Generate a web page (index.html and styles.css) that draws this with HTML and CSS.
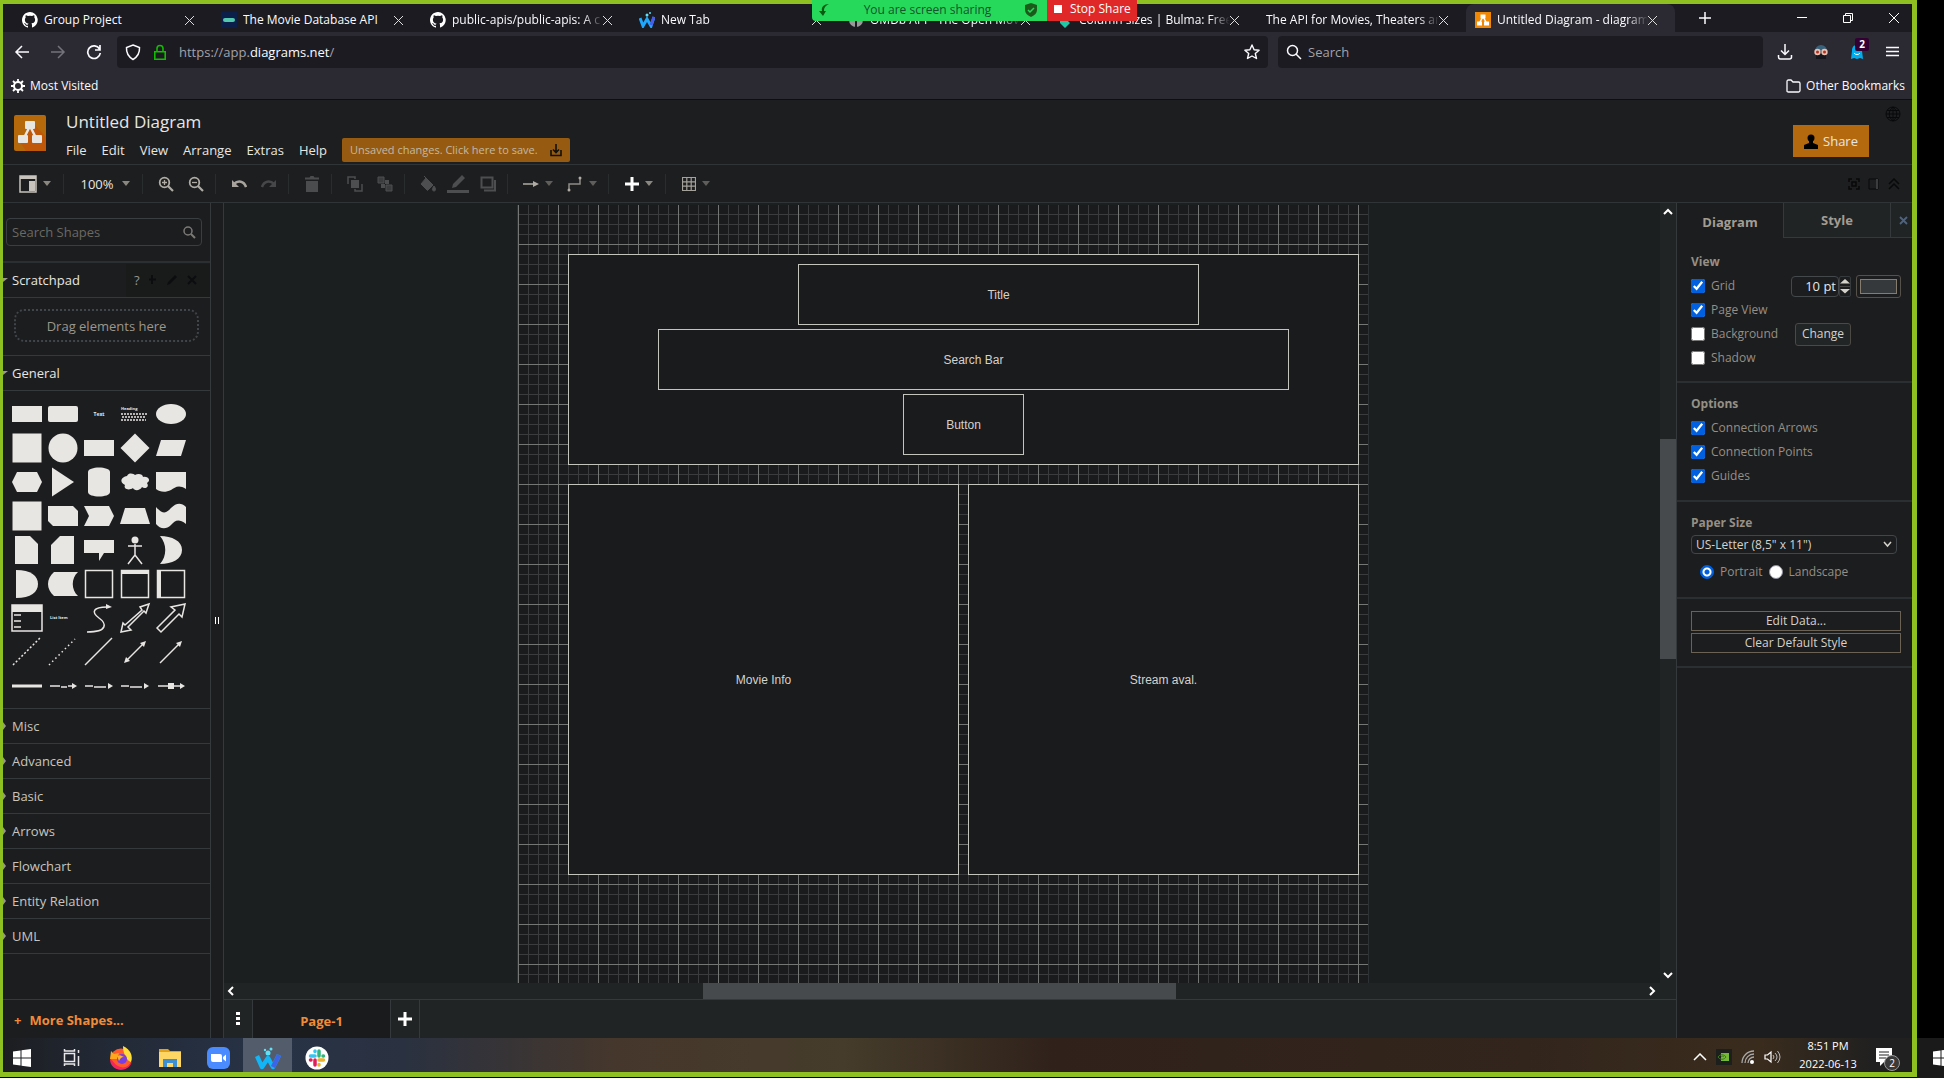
FILE: index.html
```html
<!DOCTYPE html>
<html lang="en">
<head>
<meta charset="utf-8">
<title>Untitled Diagram - diagrams.net</title>
<link rel="stylesheet" href="styles.css">
</head>
<body>
<div class="monitor">
  <div class="share-banner">
    <div class="sharing">
      <svg width="12" height="14" viewBox="0 0 12 14"><path d="M11 1C6 1 3 4 4 8H1l4 5 3-5H6C6 5 7 3 11 1z" fill="#0b5a12"/></svg>
      <span>You are screen sharing</span>
      <svg width="12" height="14" viewBox="0 0 12 14"><path d="M6 0l6 2v5c0 3-2 5-6 7-4-2-6-4-6-7V2z" fill="#1c5a1c"/><path d="M3 7l2 2 4-4" stroke="#27d95b" stroke-width="1.5" fill="none"/></svg>
    </div>
    <button class="stop"><i></i>Stop Share</button>
  </div>

  <nav class="tabs">
    <a class="tab first" href="#"><svg class="fav" viewBox="0 0 16 16"><path fill="#fff" d="M8 0C3.600 0 0 3.600 0 8c0 3.500 2.300 6.500 5.500 7.600.4.100.5-.2.500-.4v-1.400c-2.200.5-2.700-1-2.700-1-.4-.9-.9-1.200-.9-1.200-.7-.5.1-.5.100-.5.800.1 1.200.8 1.200.8.700 1.200 1.900.9 2.300.7.100-.5.300-.9.500-1.100-1.800-.2-3.600-.9-3.600-4 0-.9.300-1.600.8-2.100-.1-.2-.4-1 .1-2.100 0 0 .7-.2 2.200.8a7.500 7.500 0 0 1 4 0c1.500-1 2.200-.8 2.200-.8.400 1.100.2 1.900.1 2.100.5.600.8 1.300.8 2.100 0 3.100-1.900 3.700-3.700 3.900.3.300.6.800.6 1.500v2.200c0 .2.100.5.500.4A8 8 0 0 0 8 0z"/></svg><span>Group Project</span><b class="x"></b></a>
    <a class="tab" href="#"><svg class="fav" viewBox="0 0 16 16"><rect width="16" height="16" fill="#0b1f4a"/><rect x="2" y="6" width="12" height="4" rx="2" fill="#55c9b0"/></svg><span>The Movie Database API</span><b class="x"></b></a>
    <a class="tab" href="#"><svg class="fav" viewBox="0 0 16 16"><path fill="#fff" d="M8 0C3.600 0 0 3.600 0 8c0 3.500 2.300 6.500 5.500 7.600.4.100.5-.2.500-.4v-1.400c-2.200.5-2.700-1-2.700-1-.4-.9-.9-1.200-.9-1.200-.7-.5.1-.5.100-.5.800.1 1.200.8 1.200.8.700 1.200 1.900.9 2.300.7.100-.5.300-.9.500-1.100-1.800-.2-3.600-.9-3.600-4 0-.9.300-1.600.8-2.100-.1-.2-.4-1 .1-2.100 0 0 .7-.2 2.200.8a7.500 7.500 0 0 1 4 0c1.500-1 2.200-.8 2.200-.8.400 1.100.2 1.900.1 2.100.5.600.8 1.300.8 2.100 0 3.100-1.900 3.700-3.700 3.900.3.300.6.800.6 1.500v2.200c0 .2.100.5.500.4A8 8 0 0 0 8 0z"/></svg><span>public-apis/public-apis: A c</span><b class="x"></b></a>
    <a class="tab" href="#"><svg class="fav" viewBox="0 0 16 16"><path d="M1 6l3 8 4-7 4 7 3-9" fill="none" stroke="#1ea7fd" stroke-width="3"/><path d="M12 13l3-8" stroke="#4a5be8" stroke-width="3"/><circle cx="8" cy="3" r="1.500" fill="#5fe0f5"/><circle cx="11" cy="1" r="1" fill="#5fe0f5"/></svg><span>New Tab</span><b class="x"></b></a>
    <a class="tab" href="#"><svg class="fav" viewBox="0 0 16 16"><circle cx="8" cy="8" r="7" fill="#999"/><path d="M8 1v14M1 8h14" stroke="#1c1b22" stroke-width="2"/></svg><span>OMDb API - The Open Movie</span><b class="x"></b></a>
    <a class="tab" href="#"><svg class="fav" viewBox="0 0 16 16"><path d="M8 0l5 5-3 3 3 3-5 5-5-5V5z" fill="#21c8a8"/></svg><span>Column sizes | Bulma: Free, o</span><b class="x"></b></a>
    <a class="tab" href="#"><span>The API for Movies, Theaters and</span><b class="x"></b></a>
    <a class="tab active" href="#"><svg class="fav" viewBox="0 0 32 32"><rect width="32" height="32" fill="#f08705"/><path d="M16 9l-7 13M16 9l7 13" stroke="#fff" stroke-width="3"/><path d="M11 5h10v8H11zM4 19h10v8H4zM18 19h10v8H18z" fill="#fff"/></svg><span>Untitled Diagram - diagrams</span><b class="x"></b></a>
    <button class="newtab" aria-label="New tab"><svg width="12" height="12"><path d="M6 0v12M0 6h12" stroke="#fbfbfe" stroke-width="1.500"/></svg></button>
    <div class="winctl">
      <button aria-label="Minimize"><svg width="12" height="12"><path d="M1 5.500h10" stroke="#fff"/></svg></button>
      <button aria-label="Restore"><svg width="12" height="12"><path d="M1.500 3.500h7v7h-7zM3.500 3V1.500h7v7H9" fill="none" stroke="#fff"/></svg></button>
      <button aria-label="Close"><svg width="12" height="12"><path d="M1 1l10 10M11 1L1 11" stroke="#fff"/></svg></button>
    </div>
  </nav>

  <div class="navbar">
    <button class="nb" aria-label="Back"><svg width="16" height="16"><path d="M15 8H2M8 2L2 8l6 6" fill="none" stroke="#fbfbfe" stroke-width="1.500"/></svg></button>
    <button class="nb" aria-label="Forward"><svg width="16" height="16"><path d="M1 8h13M8 2l6 6-6 6" fill="none" stroke="#74737b" stroke-width="1.500"/></svg></button>
    <button class="nb" aria-label="Reload"><svg width="16" height="16"><path d="M13.500 5A6.300 6.300 0 1 0 14.300 9M14 1v5H9" fill="none" stroke="#fbfbfe" stroke-width="1.700"/></svg></button>
    <div class="url">
      <svg width="16" height="17"><path d="M8 1l6.500 2.500c.3 5-1.500 9-6.500 12-5-3-6.800-7-6.500-12z" fill="none" stroke="#fbfbfe" stroke-width="1.500"/></svg>
      <svg width="14" height="17"><path d="M1.800 7.800h10.400v7.400H1.800zM4 8V4.500a3 3 0 0 1 6 0V8" fill="none" stroke="#12bc00" stroke-width="1.600"/></svg>
      <div class="addr" contenteditable="true" role="textbox" aria-label="Address">https://app.<em>diagrams.net</em>/</div>
      <svg width="16" height="16"><path d="M8 1l2.100 4.700 5 .5-3.800 3.300 1.200 5L8 12l-4.500 2.500 1.200-5L.9 6.200l5-.5z" fill="none" stroke="#fbfbfe" stroke-width="1.400" stroke-linejoin="round"/></svg>
    </div>
    <label class="find"><svg width="16" height="16"><circle cx="6.500" cy="6.500" r="5" fill="none" stroke="#fbfbfe" stroke-width="1.500"/><path d="M10 10l5 5" stroke="#fbfbfe" stroke-width="1.500"/></svg><input type="text" placeholder="Search" aria-label="Search the web"></label>
    <div class="exts">
      <button class="nb" aria-label="Downloads"><svg width="16" height="16"><path d="M8 0v10M4 6.500l4 4 4-4M1.500 11v2a2 2 0 0 0 2 2h9a2 2 0 0 0 2-2v-2" fill="none" stroke="#fbfbfe" stroke-width="1.500"/></svg></button>
      <button class="nb" aria-label="Privacy extension"><svg width="16" height="16"><path d="M2 7a6 6 0 0 1 12 0z" fill="#38627c"/><path d="M3 9h10v6H3z" fill="#15171c"/><circle cx="4.500" cy="8" r="3.200" fill="#e8c0b0"/><circle cx="11.500" cy="8" r="3.200" fill="#e8c0b0"/><circle cx="4.500" cy="8" r="1.500" fill="#b03024"/><circle cx="11.500" cy="8" r="1.500" fill="#b03024"/></svg></button>
      <button class="nb ghost" aria-label="Tracker blocker"><svg width="16" height="16"><path d="M8 1c-4 0-5 3-5 6l-1 8 3-1 3 1 3-1 3 1-1-8c0-3-1-6-5-6z" fill="#00aef0"/><path d="M5 9c1 2 5 2 6 0" fill="none" stroke="#fff"/></svg><span>2</span></button>
      <button class="nb" aria-label="Menu"><svg width="14" height="12"><path d="M0 1.500h13M0 5.500h13M0 9.500h13" stroke="#fbfbfe" stroke-width="1.300"/></svg></button>
    </div>
  </div>

  <div class="bookmarks">
    <a href="#"><svg width="14" height="14" viewBox="-7 -7 14 14"><circle r="4" fill="none" stroke="#fff" stroke-width="2"/><path d="M0-7v3M0 7V4M-7 0h3M7 0H4M-5-5l2 2M5 5L3 3M5-5L3-3M-5 5l2-2" stroke="#fff" stroke-width="1.800"/></svg>Most Visited</a>
    <a href="#"><svg width="15" height="14"><path d="M1 12V2.500Q1 1 2.500 1H5l2 2h5.500Q14 3 14 4.500v7Q14 13 12.500 13h-10Q1 13 1 12z" fill="none" stroke="#fbfbfe" stroke-width="1.300"/></svg>Other Bookmarks</a>
  </div>

  <header class="apphead">
    <svg class="logo" width="32" height="36"><rect width="32" height="36" rx="2" fill="#b5690a"/><path d="M19 8l13 14v14H12l-6-9z" fill="#c0580a"/><path d="M16 11L9 25M16 11l7 14" stroke="#e8e6e3" stroke-width="2.500"/><rect x="11" y="6" width="10" height="8" rx="1" fill="#e8e6e3"/><rect x="4" y="20" width="10" height="8" rx="1" fill="#e8e6e3"/><rect x="18" y="20" width="10" height="8" rx="1" fill="#e8e6e3"/></svg>
    <div class="headmain">
      <h1>Untitled Diagram</h1>
      <div class="menu">
        <a href="#">File</a><a href="#">Edit</a><a href="#">View</a><a href="#">Arrange</a><a href="#">Extras</a><a href="#">Help</a>
        <button class="unsaved">Unsaved changes. Click here to save.<svg width="12" height="14"><path d="M1 7v5.500h10V7M6 1v8M3 6.500l3 3 3-3" fill="none" stroke="#111" stroke-width="1.600"/></svg></button>
      </div>
    </div>
    <button class="sharebtn"><svg width="14" height="15"><circle cx="7" cy="4" r="3.500"/><path d="M5 6h4v3l5 2v4H0v-4l5-2z"/></svg>Share</button>
    <svg class="globe" width="16" height="16" viewBox="-8 -8 16 16"><path d="M-7 0H7M0-7V7M-6-3.500H6M-6 3.500H6M0-7C-5-3-5 3 0 7M0-7C5-3 5 3 0 7" fill="none" stroke="#08090a"/><circle r="7" fill="none" stroke="#08090a"/></svg>
  </header>

  <div class="toolbar">
    <div class="tg"><button class="w48" aria-label="View"><svg width="18" height="18"><path d="M1 1h16v16H1z" fill="none" stroke="#c8c4bd" stroke-width="1.500"/><path d="M1 1h16v3H1zM10 6h6v10h-6z" fill="#c8c4bd"/></svg><i class="caret"></i></button></div>
    <div class="tg"><button class="w66">100%<i class="caret"></i></button></div>
    <div class="tg">
      <button aria-label="Zoom in"><svg width="16" height="16"><circle cx="6.500" cy="6.500" r="4.800" fill="none" stroke="#b0aca5" stroke-width="1.800"/><path d="M10 10l5 5" stroke="#b0aca5" stroke-width="2.200"/><path d="M6.500 4v5M4 6.500h5" stroke="#b0aca5" stroke-width="1.300"/></svg></button>
      <button aria-label="Zoom out"><svg width="16" height="16"><circle cx="6.500" cy="6.500" r="4.800" fill="none" stroke="#b0aca5" stroke-width="1.800"/><path d="M10 10l5 5" stroke="#b0aca5" stroke-width="2.200"/><path d="M4 6.500h5" stroke="#b0aca5" stroke-width="1.300"/></svg></button>
    </div>
    <div class="tg">
      <button aria-label="Undo"><svg width="16" height="12"><path d="M3 6c4-4 10-3 12 3" fill="none" stroke="#a8a49d" stroke-width="2.500"/><path d="M1 2v7h7z" fill="#a8a49d"/></svg></button>
      <button aria-label="Redo"><svg width="16" height="12"><path d="M13 6C9 2 3 3 1 9" fill="none" stroke="#454749" stroke-width="2.500"/><path d="M15 2v7H8z" fill="#454749"/></svg></button>
    </div>
    <div class="tg"><button aria-label="Delete"><svg width="14" height="16"><path d="M1 5h12v11H1zM0 1.500h4.500L5.500 0h3l1 1.500H14v2H0z" fill="#4a4c4e"/></svg></button></div>
    <div class="tg">
      <button aria-label="To front"><svg width="16" height="16"><path d="M4 4h8v8H4z" fill="#4c4e50"/><path d="M1 8V1h7v2M15 8v7H8v-2" fill="none" stroke="#4c4e50" stroke-width="1.500"/></svg></button>
      <button aria-label="To back"><svg width="16" height="16"><path d="M1 1h6v6H1zM9 9h6v6H9z" fill="#3a3c3e" stroke="#4c4e50"/><path d="M8 4h4v4H8zM4 8h4v4H4z" fill="#4c4e50"/></svg></button>
    </div>
    <div class="tg">
      <button aria-label="Fill color"><svg width="17" height="16"><path d="M6 2l7 7-5.500 5.500L1 8zM6 2L4 0M14 10c3 4 1 5 0 5s-3-1 0-5z" fill="#4c4e50" stroke="#4c4e50"/></svg></button>
      <button aria-label="Line color"><svg width="22" height="18"><path d="M0 15h22v3H0zM5 13l1-4L15 0l3 3-9 9z" fill="#4c4e50"/></svg></button>
      <button aria-label="Shadow"><svg width="16" height="16"><path d="M1.500 1.500h11v10h-11z" fill="none" stroke="#4c4e50" stroke-width="2"/><path d="M4 14.500h11V4" fill="none" stroke="#4c4e50" stroke-width="2"/></svg></button>
    </div>
    <div class="tg">
      <button class="w44" aria-label="Connection"><svg width="16" height="8"><path d="M0 4h11" stroke="#b0aca5" stroke-width="1.500"/><path d="M10 1l6 3-6 3z" fill="#b0aca5"/></svg><i class="caret dim"></i></button>
      <button class="w44" aria-label="Waypoints"><svg width="16" height="16"><path d="M2 14V8h11V2" fill="none" stroke="#8f8c86" stroke-width="1.500"/><circle cx="2" cy="14" r="1.500" fill="#b0aca5"/><circle cx="13" cy="2" r="1.500" fill="#b0aca5"/></svg><i class="caret dim"></i></button>
    </div>
    <div class="tg"><button class="w44" aria-label="Insert"><svg width="14" height="14"><path d="M7 0v14M0 7h14" stroke="#fff" stroke-width="3"/></svg><i class="caret"></i></button></div>
    <div class="tg last"><button class="w44" aria-label="Table"><svg width="14" height="14"><path d="M.5.500h13v13H.5zM.5 4.800h13M.5 9.200h13M4.800.500v13M9.200.500v13" fill="none" stroke="#a5a29b" stroke-width="1.200"/></svg><i class="caret dim"></i></button></div>
    <div class="tright">
      <svg width="12" height="12"><path d="M1 4V1h3M8 1h3v3M11 8v3H8M4 11H1V8M4 4h4v4H4z" fill="none" stroke="#08090a" stroke-width="1.500"/></svg>
      <svg width="12" height="12"><path d="M1 1h9v10H1z" fill="none" stroke="#08090a"/><path d="M8 1h2v10H8z" fill="#3a3c3e"/></svg>
      <svg width="12" height="12"><path d="M1 6l5-5 5 5M1 11l5-5 5 5" fill="none" stroke="#08090a" stroke-width="1.500"/></svg>
    </div>
  </div>

  <main class="work">
    <aside class="sidebar">
      <div class="searchwrap"><label class="ssearch"><input type="text" placeholder="Search Shapes" aria-label="Search Shapes"><svg width="13" height="13"><circle cx="5" cy="5" r="4" fill="none" stroke="#7c7a76" stroke-width="1.500"/><path d="M8 8l4 4" stroke="#7c7a76" stroke-width="2"/></svg></label></div>
      <div class="sec open"><i></i><span>Scratchpad</span>
        <div class="padtools"><a href="#">?</a><svg width="54" height="12"><path d="M3 1v9M-1 5.500h8" stroke="#0c0d0e" stroke-width="2"/><path d="M18 11l1-3 7-7 2 2-7 7z" fill="#0c0d0e"/><path d="M39 2l8 8M47 2l-8 8" stroke="#0c0d0e" stroke-width="2"/></svg></div>
      </div>
      <div class="padbody"><div class="drag">Drag elements here</div></div>
      <div class="sec open"><i></i><span>General</span></div>
      <div class="shapes">
        <svg viewBox="-18 -17 36 34"><path d="M-15-8h30V8h-30z"/></svg>
        <svg viewBox="-18 -17 36 34"><rect x="-15" y="-8" width="30" height="16" rx="2"/></svg>
        <svg viewBox="-18 -17 36 34"><text x="0" y="2" text-anchor="middle" font-size="5" font-weight="700">Text</text></svg>
        <svg viewBox="-18 -17 36 34"><text x="-14" y="-4" font-size="4" font-weight="700">Heading</text><path class="ln" stroke-dasharray="2 1" d="M-14 0h26M-13 3h24M-14 6h25"/></svg>
        <svg viewBox="-18 -17 36 34"><ellipse rx="15" ry="10"/></svg>

        <svg viewBox="-18 -17 36 34"><path d="M-14.500-14.500h29v29h-29z"/></svg>
        <svg viewBox="-18 -17 36 34"><circle r="14.500"/></svg>
        <svg viewBox="-18 -17 36 34"><path d="M-15-8h30V8h-30z"/></svg>
        <svg viewBox="-18 -17 36 34"><path d="M0-14.500L14.500 0 0 14.500-14.500 0z"/></svg>
        <svg viewBox="-18 -17 36 34"><path d="M-10-8h25L10 8h-25z"/></svg>

        <svg viewBox="-18 -17 36 34"><path d="M-10-10h20l5 10-5 10h-20l-5-10z"/></svg>
        <svg viewBox="-18 -17 36 34"><path d="M-11-14.500L11 0-11 14.500z"/></svg>
        <svg viewBox="-18 -17 36 34"><path d="M-11-10C-11-16 11-16 11-10V10C11 16-11 16-11 10z"/></svg>
        <svg viewBox="-18 -17 36 34"><path d="M-8-6c2-4 7-2 8-1 3-2 8-1 8 2 6-1 8 4 4 6 3 5-3 6-5 4-2 4-8 4-9 1-4 3-10 1-8-3-6-3-4-8 2-9z"/></svg>
        <svg viewBox="-18 -17 36 34"><path d="M-15-10h30V7C7 2 4 6 0 8-6 11-11 10-15 7z"/></svg>

        <svg viewBox="-18 -17 36 34"><path d="M-14.500-14.500h29v29h-29z"/></svg>
        <svg viewBox="-18 -17 36 34"><path d="M-15-10h25l5 5v15h-25l-5-5z"/></svg>
        <svg viewBox="-18 -17 36 34"><path d="M-15-10h25L15 0l-5 10h-25l5-10z"/></svg>
        <svg viewBox="-18 -17 36 34"><path d="M-10-8h20l5 16h-30z"/></svg>
        <svg viewBox="-18 -17 36 34"><path d="M-15-9C-7 0-4-4 0-8 5-13 10-14 15-9V8C7 2 4 5 0 9-5 14-11 13-15 8z"/></svg>

        <svg viewBox="-18 -17 36 34"><path d="M-12-14h15l8 8v20h-23z"/></svg>
        <svg viewBox="-18 -17 36 34"><path d="M-3-14h14v28h-23V-5z"/></svg>
        <svg viewBox="-18 -17 36 34"><path d="M-15-10h30V3H5l-5 8V3h-15z"/></svg>
        <svg viewBox="-18 -17 36 34"><circle cy="-10" r="3.500"/><path class="ln" d="M0-6V5M-7-4H7M0 5l-7 9M0 5l7 9"/></svg>
        <svg viewBox="-18 -17 36 34"><path d="M-11-14C1-14 11-9 11 0S1 14-11 14C-4 6-4-6-11-14z"/></svg>

        <svg viewBox="-18 -17 36 34"><path d="M-11-14C4-14 11-8 11 0S4 14-11 14z"/></svg>
        <svg viewBox="-18 -17 36 34"><path d="M-9-12h24C8-6 8 6 15 12H-9c-8-7-8-17 0-24z"/></svg>
        <svg viewBox="-18 -17 36 34"><path class="ln" d="M-13.500-13.500h27v27h-27z"/></svg>
        <svg viewBox="-18 -17 36 34"><path class="ln" d="M-13.500-13.500h27v27h-27z"/><path d="M-14-14h28v4h-28z"/></svg>
        <svg viewBox="-18 -17 36 34"><path class="ln" d="M-13.500-13.500h27v27h-27z"/><path d="M-14-14h4v28h-4z"/></svg>

        <svg viewBox="-18 -17 36 34"><path class="ln" d="M-15-13h30v26h-30z"/><path d="M-15-13h30v7h-30z"/><path class="ln" d="M-13-3h7M-13 3h7M-13 9h7"/></svg>
        <svg viewBox="-18 -17 36 34"><text x="-13" y="1" font-size="4" font-weight="700">List Item</text></svg>
        <svg viewBox="-18 -17 36 34"><path class="ln" d="M-12 14C10 14 7 5 0 0-8-6-6-11 8-11"/><path d="M7-14l6 3-6 2z"/></svg>
        <svg viewBox="-18 -17 36 34"><path class="ln" d="M-14 14l2-9 2 2L7-8 5-11l9-3-3 9-2-2L-7 9l3 3z"/></svg>
        <svg viewBox="-18 -17 36 34"><path class="ln" d="M-14 10L4-8 0-11l14-3-3 13-3-3-18 18z"/></svg>

        <svg viewBox="-18 -17 36 34"><path class="ln" stroke-dasharray="2 2" d="M-14 13L13-14"/></svg>
        <svg viewBox="-18 -17 36 34"><path class="ln" stroke-dasharray="1.500 3" d="M-14 13L12-13"/></svg>
        <svg viewBox="-18 -17 36 34"><path class="ln" d="M-14 13L13-14"/></svg>
        <svg viewBox="-18 -17 36 34"><path class="ln" d="M-9 9L9-9"/><path d="M-11 11l2-6 4 4zM11-11L9-5 5-9z"/></svg>
        <svg viewBox="-18 -17 36 34"><path class="ln" d="M-11 11L9-9"/><path d="M11-11L9-5 5-9z"/></svg>

        <svg viewBox="-18 -17 36 34"><path d="M-15-1.500h30v3h-30z"/></svg>
        <svg viewBox="-18 -17 36 34"><path class="ln" d="M-13 0h10M-2 1h6M5 0h5"/><path d="M9-3l5 3-5 3z"/></svg>
        <svg viewBox="-18 -17 36 34"><path class="ln" d="M-14 0h8M-5 1h12"/><path d="M9-3l5 3-5 3z"/></svg>
        <svg viewBox="-18 -17 36 34"><path class="ln" d="M-14 0h8M-5 1h12"/><path d="M9-3l5 3-5 3z"/></svg>
        <svg viewBox="-18 -17 36 34"><path class="ln" d="M-13 0h25"/><path d="M-3-3h6v6h-6zM9-3l5 3-5 3z"/></svg>
      </div>
      <div class="sec"><i></i><span>Misc</span></div>
      <div class="sec"><i></i><span>Advanced</span></div>
      <div class="sec"><i></i><span>Basic</span></div>
      <div class="sec"><i></i><span>Arrows</span></div>
      <div class="sec"><i></i><span>Flowchart</span></div>
      <div class="sec"><i></i><span>Entity Relation</span></div>
      <div class="sec"><i></i><span>UML</span></div>
      <button class="more"><span>+</span>More Shapes...</button>
    </aside>
    <div class="splitter"><i></i></div>

    <section class="editor">
      <div class="viewport">
        <div class="page">
          <div class="node area"></div>
          <div class="node title">Title</div>
          <div class="node search">Search Bar</div>
          <div class="node btn">Button</div>
          <div class="node info">Movie Info</div>
          <div class="node stream">Stream aval.</div>
        </div>
      </div>
      <div class="vscroll"><svg width="10" height="7"><path d="M1 6l4-4 4 4" /></svg><i></i><svg width="10" height="7"><path d="M1 1l4 4 4-4"/></svg></div>
      <div class="hscroll"><svg width="7" height="10"><path d="M6 1L2 5l4 4"/></svg><i></i><svg width="7" height="10"><path d="M1 1l4 4-4 4"/></svg></div>
      <div class="pages">
        <button class="dots" aria-label="Pages"><svg width="4" height="14"><path d="M0 0h4v3H0zM0 5h4v3H0zM0 10h4v3H0z" fill="#fff"/></svg></button>
        <button class="pagetab">Page-1</button>
        <button class="dots" aria-label="Insert page"><svg width="14" height="14"><path d="M7 0v14M0 7h14" stroke="#fff" stroke-width="3"/></svg></button>
      </div>
    </section>

    <aside class="format">
      <div class="ftabs"><button class="on">Diagram</button><button>Style</button><button class="fx" aria-label="Close"><svg width="9" height="9"><path d="M1 1l7 7M8 1L1 8" stroke="#51637c" stroke-width="1.800"/></svg></button></div>
      <div class="fsec first">
        <h2>View</h2>
        <div class="row"><label><input type="checkbox" checked>Grid</label>
          <div class="gridsize"><input type="text" value="10 pt" aria-label="Grid size"><button class="spin" aria-label="Step grid size"><svg width="10" height="18"><path d="M0 6.500L5 2l5 4.500zM0 12l5 4.500L10 12z" fill="#d5d2cc"/><path d="M0 9.500h10" stroke="#444"/></svg></button></div>
          <button class="swatch" aria-label="Grid color"><i></i></button></div>
        <div class="row"><label><input type="checkbox" checked>Page View</label></div>
        <div class="row"><label><input type="checkbox">Background</label><button class="change">Change</button></div>
        <div class="row"><label><input type="checkbox">Shadow</label></div>
      </div>
      <div class="fsec options">
        <h2>Options</h2>
        <div class="row"><label><input type="checkbox" checked>Connection Arrows</label></div>
        <div class="row"><label><input type="checkbox" checked>Connection Points</label></div>
        <div class="row"><label><input type="checkbox" checked>Guides</label></div>
      </div>
      <div class="fsec paper">
        <h2>Paper Size</h2>
        <div class="sel"><select aria-label="Paper Size"><option>US-Letter (8,5" x 11")</option></select><svg width="9" height="7"><path d="M1 1l3.500 4L8 1" fill="none" stroke="#d5d2cc" stroke-width="1.500"/></svg></div>
        <div class="row radios"><label><input type="radio" name="o" checked>Portrait</label><label><input type="radio" name="o">Landscape</label></div>
      </div>
      <div class="fsec acts"><button>Edit Data...</button><button>Clear Default Style</button></div>
    </aside>
  </main>

  <footer class="taskbar">
    <button aria-label="Start"><svg width="18" height="18"><path d="M0 2.500L7.500 1.500V8.500H0zM8.500 1.300L18 0v8.500H8.500zM0 9.500h7.500v7L0 15.500zM8.500 9.500H18V18L8.500 16.700z" fill="#fff"/></svg></button>
    <button aria-label="Task view"><svg width="18" height="18"><path d="M1.500 4.500h10v8h-10zM1.500 0v2h10V0M1.500 17v-2h10v2M15.500 1v3M15.500 7v10" fill="none" stroke="#e8e8e8" stroke-width="1.500"/></svg></button>
    <button aria-label="Firefox"><svg width="24" height="24"><circle cx="12" cy="13" r="10.500" fill="#ff5a2c"/><path d="M14 0c8 4 10 10 8 16-4-1-8-8-8-16z" fill="#ffde3a"/><path d="M1 13c0 14 20 14 22 2-3 6-9 8-14 5-4-2-5-6-8-7z" fill="#f5255e"/><path d="M2 5l3 3 5-1-2 6H1z" fill="#ffa51e"/><circle cx="13" cy="13" r="5" fill="#7a3fe0"/><path d="M8 10c3-2 5 0 7 1-3 0-4 2-5 4z" fill="#ffb02a"/></svg></button>
    <button aria-label="File Explorer"><svg width="24" height="20"><path d="M1 1h9l2 2h11v4H1z" fill="#e3a21a"/><path d="M1 4h22v15H1z" fill="#fdd663"/><path d="M5 19v-8h14v8h-4v-4H9v4z" fill="#3d8fd1"/></svg></button>
    <button aria-label="Zoom"><svg width="24" height="24"><rect x="0" y="1" width="23" height="22" rx="6" fill="#4a8cff"/><path d="M4 8h9q2 0 2 2v6H6q-2 0-2-2zM16 11l3-2.500v7L16 13z" fill="#fff"/></svg></button>
    <button class="cur" aria-label="Browser"><svg width="26" height="24"><path d="M2 10l5 11 6-9 5 9 6-12" fill="none" stroke="#12b5f5" stroke-width="4.500" stroke-linejoin="round"/><path d="M18 21l6-12" stroke="#3d63e6" stroke-width="4.500"/><circle cx="13" cy="7" r="2.500" fill="#5fe0f5"/><circle cx="16" cy="3" r="1.500" fill="#5fe0f5"/><circle cx="10" cy="4" r="1.200" fill="#5fe0f5"/></svg></button>
    <button aria-label="Slack"><svg width="24" height="24"><circle cx="12" cy="12" r="11.500" fill="#fff"/><g stroke-width="3.500" stroke-linecap="round"><path d="M10 5v.5M5.500 10H10" stroke="#36c5f0"/><path d="M14 5v5M18.500 10H18" stroke="#2eb67d"/><path d="M14 19v-.5M14 14h4.500" stroke="#ecb22e"/><path d="M10 14v5M6 14h-.5" stroke="#e01e5a"/></g></svg></button>
    <div class="tray">
      <svg width="14" height="8"><path d="M1 7l6-6 6 6" fill="none" stroke="#fff" stroke-width="1.500"/></svg>
      <svg width="16" height="16"><path fill="#1c1f1c" d="M0 0h16v16H0z"/><path d="M5 4h8v8H5z" fill="#76b938"/><path d="M2 8c2-3 6-3 8 0-2 3-6 3-8 0zM5 8c1-1 2-1 3 0" fill="none" stroke="#3d7a1e"/></svg>
      <svg width="14" height="14"><path d="M1 13A12 12 0 0 1 13 1M4 13a9 9 0 0 1 9-9M7 13a6 6 0 0 1 6-6" fill="none" stroke="#aaa" stroke-width="1.300"/><circle cx="11" cy="12" r="2" fill="#fff"/></svg>
      <svg width="17" height="14"><path d="M1 5h2.500L7 2v10L3.500 9H1z" fill="none" stroke="#fff" stroke-width="1.200"/><path d="M9 5q2 2 0 4M11 3q4 4 0 8M13.500 1q5 6 0 12" fill="none" stroke="#bbb"/></svg>
      <div class="clock"><span>8:51 PM</span><span>2022-06-13</span></div>
      <div class="notif"><svg width="18" height="18"><path d="M0 0h16v14H8l-4 4v-4H0z" fill="#fff"/><path d="M3 4h10M3 7h10M3 10h7" stroke="#222" stroke-width="1.200"/></svg><span>2</span></div>
    </div>
  </footer>
</div>
<div class="next-monitor"><div><svg width="18" height="18"><path d="M0 2.500L7.500 1.500V8.500H0zM8.500 1.300L18 0v8.500H8.500zM0 9.500h7.500v7L0 15.500zM8.500 9.500H18V18L8.500 16.700z" fill="#fff"/></svg></div></div>
</body>
</html>
```
FILE: styles.css
```css
* { box-sizing: border-box; }
body {
  margin: 0;
  display: flex;
  height: 100vh;
  overflow: hidden;
  background: #000;
  color: #e8e6e3;
  font: 12px/16px "Open Sans", "Noto Sans", sans-serif;
}
button, input, select { font: inherit; color: inherit; margin: 0; padding: 0; border: 0; background: none; }
a { color: inherit; text-decoration: none; }
svg { display: block; flex: none; }
h1, h2 { margin: 0; }

.monitor {
  position: relative;
  flex: 1;
  min-width: 0;
  display: flex;
  flex-direction: column;
  border: solid #8fc021;
  border-width: 4px 5px 5px 3px;
  margin-bottom: 1px;
}

/* Screen sharing banner */
.share-banner { position: absolute; z-index: 5; top: -4px; left: 809px; display: flex; }
.sharing { display: flex; align-items: center; justify-content: space-between; width: 235px; height: 21px; padding: 0 10px 2px 6px; background: #27d95b; color: #14532d; border-bottom-left-radius: 4px; }
.stop { display: flex; align-items: center; gap: 8px; width: 90px; height: 21px; padding: 0 0 3px 7px; background: #e02828; color: #fff; white-space: nowrap; }
.stop i { width: 8px; height: 8px; background: #fff; }

/* Browser chrome */
.tabs { display: flex; height: 28px; background: #1c1b22; color: #fbfbfe; }
.tab { display: flex; align-items: center; width: 209px; padding: 4px 18px 0 9px; overflow: hidden; white-space: nowrap; }
.tab.first { padding-left: 19px; }
.tab span { flex: 1; overflow: hidden; }
.tab:nth-child(n+3) span { mask-image: linear-gradient(to left, transparent, #000 20px); }
.tab.active { background: #2b2a33; border-radius: 8px 8px 0 0; }
.fav { width: 16px; height: 16px; margin-right: 6px; }
.x { width: 9px; height: 9px; background: linear-gradient(45deg, transparent 46%, #ddd 46% 54%, transparent 54%), linear-gradient(-45deg, transparent 46%, #ddd 46% 54%, transparent 54%); }
.newtab { width: 60px; display: grid; place-items: center; }
.winctl { display: flex; margin-left: auto; margin-right: -5px; }
.winctl button { width: 46px; display: grid; place-items: center; }

.navbar { display: flex; align-items: center; height: 36px; padding: 4px 0 0 1px; background: #2b2a33; }
.nb { width: 36px; height: 30px; display: grid; place-items: center; }
.url, .find { display: flex; align-items: center; height: 32px; background: #1c1b22; border-radius: 4px; font-size: 13px; padding: 0 8px; }
.url { flex: 1157 1 0; gap: 12px; margin-left: 5px; }
.addr { flex: 1; color: #a3a2a9; outline: 0; }
.addr em { color: #fbfbfe; font-style: normal; }
.find { flex: 478 1 0; gap: 6px; margin-left: 10px; }
.find input { flex: 1; min-width: 0; outline: 0; }
.find input::placeholder { color: #a3a2a9; opacity: 1; }
.exts { display: flex; margin-left: 4px; margin-right: 1px; }
.ghost { position: relative; }
.ghost span { position: absolute; left: 16px; top: 1px; width: 14px; height: 13px; font: bold 10px/13px "Open Sans", sans-serif; background: #330033; color: #fff; border-radius: 2px; }
.bookmarks { display: flex; justify-content: space-between; align-items: center; height: 32px; padding: 4px 7px 0 8px; background: #2b2a33; border-bottom: 1px solid #0e0e12; color: #fbfbfe; }
.bookmarks a { display: flex; align-items: center; gap: 5px; }

/* Application header */
.apphead { display: flex; height: 65px; padding: 15px 11px 0; background: #1c1e1f; border-bottom: 1px solid #313436; }
.headmain { flex: 1; margin: -5px 0 0 20px; }
.headmain h1 { font-weight: 400; font-size: 17px; line-height: 24px; }
.menu { display: flex; align-items: center; gap: 15px; height: 32px; font-size: 13px; }
.unsaved { display: flex; align-items: center; justify-content: space-between; width: 228px; height: 24px; padding: 0 8px; background: #965b10; border-radius: 2px; color: #c2b8a5; font-size: 11px; white-space: nowrap; }
.sharebtn { display: flex; align-items: center; justify-content: center; gap: 5px; width: 76px; height: 32px; margin-top: 10px; background: #b5690e; font-size: 13px; }
.globe { margin: -9px 0 0 16px; }

.toolbar { display: flex; align-items: center; height: 38px; background: #1c1e1f; border-bottom: 1px solid #313436; }
.tg { display: flex; align-items: center; height: 20px; padding: 0 4px 0 8px; border-right: 1px solid #2a2d2e; }
.tg.last { border: 0; }
.tg button { display: flex; align-items: center; justify-content: center; width: 30px; font-size: 13px; }
.tg .w44 { width: 44px; gap: 6px; }
.tg .w48 { width: 48px; gap: 6px; }
.tg .w66 { width: 66px; gap: 8px; }
.caret { border: 4px solid transparent; border-top: 5px solid #8a8781; border-bottom: 0; }
.caret.dim { border-top-color: #5f5e5b; }
.tright { display: flex; gap: 8px; margin-left: auto; padding-right: 12px; }

/* Workspace */
.work { flex: 1; display: flex; min-height: 0; background: #1c1d1f; }
.sidebar { display: flex; flex-direction: column; width: 208px; border-right: 1px solid #35393b; }
.searchwrap { height: 60px; padding: 15px 8px 0 3px; border-bottom: 2px solid #2c2f31; }
.ssearch { display: flex; align-items: center; height: 28px; padding: 0 5px; border: 1px solid #3a3e40; border-radius: 4px; }
.ssearch input { flex: 1; min-width: 0; font-size: 13px; outline: 0; }
.ssearch input::placeholder { color: #6b6963; opacity: 1; }
.sec { display: flex; align-items: center; height: 35px; border-bottom: 1px solid #35393b; font-size: 13px; color: #c9c5be; }
.sec i { flex: none; width: 3px; margin-right: 6px; border: 4px solid transparent; border-left: 3px solid #9a978f; border-right: 0; }
.sec.open { color: #e8e6e3; }
.sec.open i { width: 5px; height: 4px; margin-right: 4px; border: 0; background: #9a978f; clip-path: polygon(0 0, 100% 0, 0 100%); }
.padtools { display: flex; align-items: center; gap: 9px; width: 84px; height: 33px; margin-left: auto; padding-left: 8px; background: #191b1b; color: #96938c; }
.padbody { height: 58px; padding: 11px 11px; border-bottom: 1px solid #35393b; }
.drag { height: 33px; border: 2px dotted #42464a; border-radius: 10px; text-align: center; font-size: 13px; line-height: 30px; color: #9d968b; }
.shapes { display: grid; grid-template-columns: repeat(5, 36px); grid-auto-rows: 34px; padding: 6px 6px 5px; border-bottom: 1px solid #35393b; fill: #e8e6e3; }
.ln { fill: none; stroke: #e8e6e3; stroke-width: 1.5px; }
.more { display: flex; align-items: center; gap: 8px; height: 39px; margin-top: auto; padding: 2px 0 0 11px; border-top: 1px solid #35393b; font-weight: 700; font-size: 13px; color: #f08b38; }
.splitter { width: 13px; display: flex; align-items: center; justify-content: center; border-right: 1px solid #35393b; }
.splitter i { width: 4px; height: 7px; border: solid #fff; border-width: 0 1px; }

.editor { flex: 1; min-width: 0; display: grid; grid-template: minmax(0, 1fr) 16px 39px / minmax(0, 1fr) 16px; background: #1b1f20; }
.editor::after { content: ""; grid-row: 2; grid-column: 2; background: #202425; }
.viewport { overflow: hidden; padding: 2px 0 0 2px; }
.page {
  position: relative;
  width: 852px;
  height: 1100px;
  margin: 0 auto;
  border: solid #2d3133;
  border-width: 0 1px;
  background:
    linear-gradient(90deg, #747575 1px, transparent 1px) 0 0 / 40px 40px,
    linear-gradient(#747575 1px, transparent 1px) 0 -1px / 40px 40px,
    linear-gradient(90deg, #3b3c3d 1px, transparent 1px) 0 0 / 10px 10px,
    linear-gradient(#3b3c3d 1px, transparent 1px) 0 -1px / 10px 10px,
    #1a1b1d;
}
.node { position: absolute; display: grid; place-items: center; border: 1px solid #c4c4be; background: #1a1b1d; color: #d5d2cc; font: 12px/14px "Liberation Sans", Arial, sans-serif; }
.area { left: 50px; top: 49px; width: 791px; height: 211px; }
.title { left: 280px; top: 59px; width: 401px; height: 61px; }
.search { left: 140px; top: 124px; width: 631px; height: 61px; }
.btn { left: 385px; top: 189px; width: 121px; height: 61px; }
.info, .stream { top: 279px; width: 391px; height: 391px; }
.info { left: 50px; }
.stream { left: 450px; }
.vscroll, .hscroll { display: grid; background: #202425; fill: none; stroke: #fff; stroke-width: 2px; }
.vscroll { grid-template-rows: 7px 223fr 219fr 311fr 7px; justify-items: center; padding: 5px 0 4px; }
.vscroll i { grid-row: 3; width: 16px; background: #464a4c; }
.vscroll svg:last-child { grid-row: 5; }
.hscroll { grid-row: 2; grid-template-columns: 7px 469fr 474fr 473fr 7px; align-items: center; padding: 0 4px 0 3px; }
.hscroll i { grid-column: 3; height: 16px; background: #464a4c; }
.hscroll svg:last-child { grid-column: 5; }
.pages { grid-row: 3; grid-column: 1 / 3; display: flex; background: #202425; border-top: 1px solid #35393b; }
.pages button { border-right: 1px solid #35393b; }
.dots { width: 29px; display: grid; place-items: center; }
.pagetab { width: 138px; padding-top: 4px; background: #1a1b1c; color: #f08b38; font-weight: 700; font-size: 13px; }

/* Format panel */
.format { width: 236px; border-left: 1px solid #35393b; color: #968f84; }
.ftabs { display: grid; grid-template-columns: 106px 107px 1fr; height: 35px; font-size: 13px; }
.ftabs button { font-weight: 700; color: #a39c91; background: #202425; border: solid #35393b; border-width: 0 0 1px 1px; }
.ftabs .on { background: none; border: 0; padding-top: 2px; }
.ftabs .fx { display: grid; place-items: center; padding-left: 3px; }
.fsec { padding: 12px 11px 13px 14px; border-bottom: 2px solid #2c2f31; }
.fsec.first { padding-top: 15px; padding-bottom: 11px; }
.fsec h2 { font-size: 12px; line-height: 18px; margin-bottom: 3px; }
.row { display: flex; align-items: center; height: 24px; }
.row label { display: flex; align-items: center; gap: 6px; }
.first .row label { width: 100px; }
.row input[type=checkbox] { width: 14px; height: 14px; accent-color: #0060df; }
.options { padding-bottom: 12px; }
.gridsize { display: flex; height: 21px; }
.gridsize input { width: 48px; border: 1px solid #44484a; border-radius: 4px; text-align: right; padding-right: 2px; color: #e8e6e3; font-size: 13px; }
.spin { width: 12px; border: 1px solid #35393b; border-radius: 2px; }
.swatch { width: 45px; height: 23px; margin-left: 5px; padding: 3px; border: 1px solid #55504a; border-radius: 3px; }
.swatch i { display: block; height: 15px; background: #35393b; border: 1px solid #857c6e; }
.change { width: 56px; height: 23px; margin-left: 4px; border: 1px solid #4c4843; border-radius: 3px; background: #222526; color: #d5d2cc; }
.sel { position: relative; width: 206px; }
.sel select { appearance: none; display: block; width: 100%; height: 19px; padding: 0 4px; border: 1px solid #42464a; border-radius: 4px; background: #1c1d1f; color: #d5d2cc; line-height: 16px; }
.sel svg { position: absolute; right: 5px; top: 6px; }
.radios { gap: 6px; margin-top: 6px; padding-left: 9px; }
.radios input { appearance: none; width: 14px; height: 14px; border-radius: 50%; background: #fff; border: 1px solid #8f8f9d; }
.radios input:checked { border-color: #0060df; background: radial-gradient(circle, #0060df 0 2px, #fff 3px 4px, #0060df 5px); }
.acts { display: grid; gap: 2px; }
.acts button { height: 20px; border: 1px solid #6b6155; color: #d5d2cc; line-height: 16px; }

/* Windows taskbar */
.taskbar { display: flex; height: 34px; background: linear-gradient(90deg, #1c1d20 0, #222935 5%, #283347 14%, #2a3140 21%, #45372c 32%, #453c2b 44%, #30221b 55%, #32251c 80%, #3a2c1d 92%, #202020 98%); }
.taskbar button { width: 49px; display: grid; place-items: center; padding-top: 5px; }
.taskbar button:first-child { width: 44px; padding-right: 6px; }
.taskbar .cur { background: #535c6b; }
.tray { display: flex; align-items: center; gap: 9px; margin-left: auto; padding: 4px 18px 0 0; }
.clock { display: flex; flex-direction: column; width: 68px; margin: -4px 0 0 4px; line-height: 18px; font-size: 11px; text-align: center; color: #fff; }
.notif { position: relative; margin-left: 5px; }
.notif span { position: absolute; left: 8px; top: 7px; width: 16px; height: 16px; border-radius: 50%; border: 1px solid #999; background: #3a3a3a; color: #fff; font-size: 10px; line-height: 14px; text-align: center; }

.next-monitor { width: 27px; display: flex; flex-direction: column; justify-content: flex-end; overflow: hidden; }
.next-monitor div { height: 40px; padding: 11px 0 0 16px; background: #1a1a1a; }
```
